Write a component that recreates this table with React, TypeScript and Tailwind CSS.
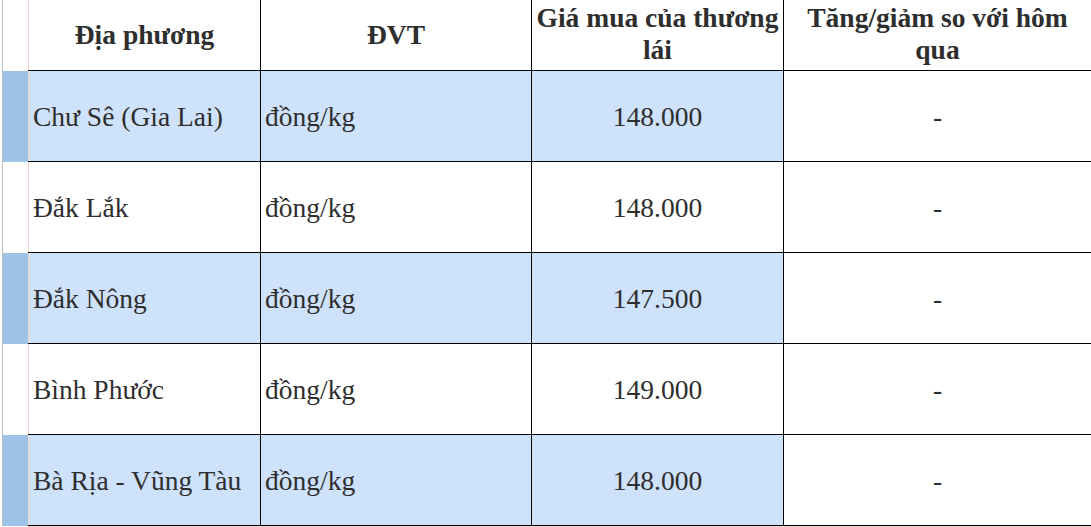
const rows = [
  { place: 'Chư Sê (Gia Lai)', unit: 'đồng/kg', price: '148.000', change: '-', hl: true },
  { place: 'Đắk Lắk', unit: 'đồng/kg', price: '148.000', change: '-', hl: false },
  { place: 'Đắk Nông', unit: 'đồng/kg', price: '147.500', change: '-', hl: true },
  { place: 'Bình Phước', unit: 'đồng/kg', price: '149.000', change: '-', hl: false },
  { place: 'Bà Rịa - Vũng Tàu', unit: 'đồng/kg', price: '148.000', change: '-', hl: true },
];

function Gutter({ hl }: { hl: boolean }) {
  return (
    <div className="w-[28px] shrink-0 pl-[2px] flex">
      <div className={hl ? 'flex-1 border-l border-[#bdbdbd] bg-[#9dc3e6]' : 'flex-1 border-l border-[#bdbdbd] bg-white'} />
    </div>
  );
}

export default function App() {
  return (
    <div className="w-[1091px] h-[527px] bg-white text-[#2e2e2e] overflow-hidden font-['Liberation_Serif','Times_New_Roman',serif]">
      {/* header */}
      <div className="flex h-[71px]">
        <Gutter hl={false} />
        <div className="flex flex-1 border-b border-black text-[27.5px] font-bold leading-[32px] text-center">
          <div className="w-[232px] shrink-0 border-l border-[#f0d4cc] flex items-center justify-center">Địa phương</div>
          <div className="w-[271px] shrink-0 border-l border-black flex items-center justify-center">ĐVT</div>
          <div className="w-[252px] shrink-0 border-l border-black flex items-center justify-center pb-[2px]">
            Giá mua của thương lái
          </div>
          <div className="flex-1 border-l border-black flex items-center justify-center px-3 pb-[2px]">
            Tăng/giảm so với hôm qua
          </div>
        </div>
      </div>

      {rows.map((r) => (
        <div key={r.place} className="flex h-[91px]">
          <Gutter hl={r.hl} />
          <div className="flex flex-1 border-b border-black text-[27.5px]">
            <div
              className={
                r.hl
                  ? 'w-[232px] shrink-0 border-l border-[#f0d4cc] bg-[#cfe2fc] flex items-center pl-[4px] pt-[2px]'
                  : 'w-[232px] shrink-0 border-l border-[#f0d4cc] bg-white flex items-center pl-[4px] pt-[2px]'
              }
            >
              {r.place}
            </div>
            <div
              className={
                r.hl
                  ? 'w-[271px] shrink-0 border-l border-black bg-[#cfe2fc] flex items-center pl-[4px] pt-[2px]'
                  : 'w-[271px] shrink-0 border-l border-black bg-white flex items-center pl-[4px] pt-[2px]'
              }
            >
              {r.unit}
            </div>
            <div
              className={
                r.hl
                  ? 'w-[252px] shrink-0 border-l border-black bg-[#cfe2fc] flex items-center justify-center pt-[2px]'
                  : 'w-[252px] shrink-0 border-l border-black bg-white flex items-center justify-center pt-[2px]'
              }
            >
              {r.price}
            </div>
            <div className="flex-1 border-l border-black bg-white flex items-center justify-center pt-[2px]">{r.change}</div>
          </div>
        </div>
      ))}
      <div className="ml-[28px] h-[1px] bg-[#f0d4cc]" />
    </div>
  );
}
